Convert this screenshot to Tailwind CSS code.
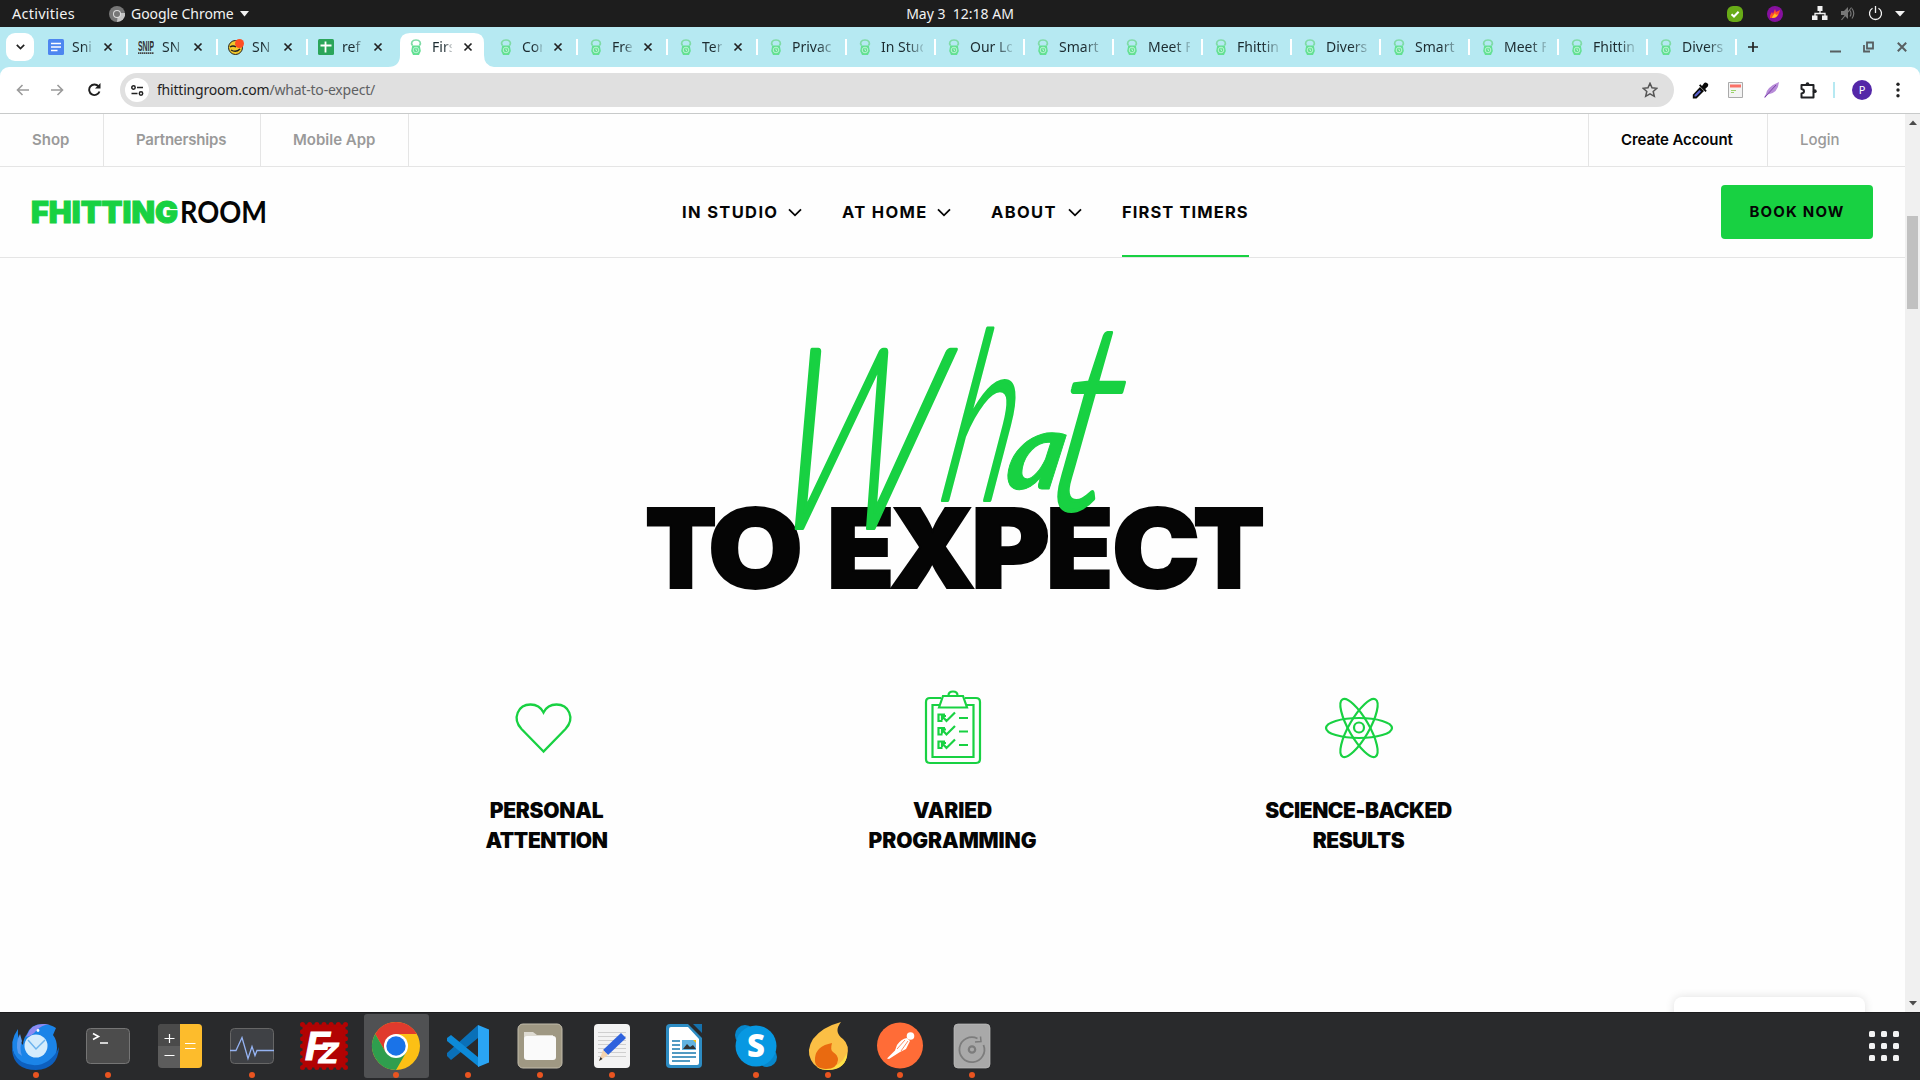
<!DOCTYPE html>
<html lang="en">
<head>
<meta charset="utf-8">
<title>What To Expect</title>
<script src="https://cdn.jsdelivr.net/npm/@tailwindcss/browser@4"></script>
</head>
<body class="w-[1920px] h-[1080px] overflow-hidden bg-white flex flex-col font-['Noto_Sans',sans-serif] text-[14px]">
<svg class="hidden">
  <symbol id="bell" viewBox="0 0 16 16"><path d="M4.500 6.500C2.500 4 4 1 8 1s5.500 3 3.500 5.500" fill="none" stroke="#7fdba6" stroke-width="1.700"/><path d="M4.200 6.500h7.600l1 5.500-1.800 4H5l-1.800-4z" fill="#63e092"/><circle cx="8" cy="11" r="2.800" fill="none" stroke="#c2f5da" stroke-width=".9"/><path d="M8 9.500v1.500l1 1.200" fill="none" stroke="#c2f5da" stroke-width="1"/></symbol>
  <symbol id="x" viewBox="0 0 10 10"><path d="M1.500 1.500l7 7M8.500 1.500l-7 7" stroke="#222" stroke-width="1.700"/></symbol>
  <symbol id="chev" viewBox="0 0 14 9"><path d="M1 1.300l6 6 6-6" fill="none" stroke="#050505" stroke-width="1.800"/></symbol>
</svg>

<div class="h-[27px] shrink-0 bg-[#1d1d1d] text-[#f2f2f2] grid grid-cols-3 items-center">
  <div class="flex items-center pl-3">
    <span class="w-[62px] text-[14.500px] tracking-[0.250px]">Activities</span>
    <svg class="ml-[35px] mr-1.5" width="16" height="16" viewBox="0 0 16 16"><circle cx="8" cy="8" r="8" fill="#777"/><path d="M8 16a8 8 0 0 0 8-9H9z" fill="#c4c4c4"/><circle cx="8" cy="8" r="4" fill="#ddd"/><circle cx="8" cy="8" r="3" fill="#777"/></svg>
    <span class="w-[104px] whitespace-nowrap tracking-[-0.05px]">Google Chrome</span>
    <svg class="ml-[5px]" width="9" height="6"><path d="M0 0h9L4.500 5.500z" fill="#f2f2f2"/></svg>
  </div>
  <div class="text-center"><span class="whitespace-pre">May 3  12:18 AM</span></div>
  <div class="flex items-center justify-end pr-[15px]">
    <svg width="16" height="16" viewBox="0 0 16 16"><rect width="16" height="16" rx="6" fill="#68ab17"/><path d="M4.500 8.200l2.500 2.300 4.600-4.700" fill="none" stroke="#fff" stroke-width="2"/></svg>
    <svg class="ml-6" width="16" height="16" viewBox="0 0 16 16"><circle cx="8" cy="8" r="8" fill="#86109f"/><path d="M3 12c-.5-3 1-4 2-6l1 2 2-5 1 3 4-2c-1 4-2 7-6 8z" fill="#ff4d2e"/><path d="M5 12c0-2 2-3 3-5l1 2 2-1c-1 3-3 4-6 4z" fill="#ffc21c"/></svg>
    <svg class="ml-[29px]" width="16" height="15" viewBox="0 0 16 15"><path d="M8 3v5M3 11V7.500h10V11" fill="none" stroke="#f2f2f2" stroke-width="1.300"/><path d="M5.500 0h5v5h-5zM0 9.500h5.500V14H0zM10 9.500h5.500V14H10z" fill="#f2f2f2"/></svg>
    <svg class="ml-3" width="16" height="15" viewBox="0 0 16 15"><path d="M1 5h3l4-4v12l-4-4H1z" fill="#777"/><path d="M10 4.500q2 3 0 6M12 2.500q3.500 5 0 10M1.500 14l10-12.500" fill="none" stroke="#777" stroke-width="1.200"/></svg>
    <svg class="ml-3" width="15" height="15" viewBox="0 0 15 15"><path d="M4.500 2.300a6 6 0 1 0 6 0M7.500 0v7" fill="none" stroke="#f2f2f2" stroke-width="1.300"/></svg>
    <svg class="ml-3" width="10" height="6"><path d="M0 0h10L5 5.500z" fill="#f2f2f2"/></svg>
  </div>
</div>

<div class="h-10 shrink-0 bg-[#b6e9f2] flex items-start text-[#1c2b30]">
  <div class="w-7 h-7 mt-1.5 ml-1.5 mr-1 rounded-[9px] bg-white flex items-center justify-center"><svg width="9" height="6" viewBox="0 0 9 6"><path d="M.8.8l3.700 3.700L8.200.8" fill="none" stroke="#222" stroke-width="1.700"/></svg></div>
  <div id="tabs" class="flex h-10 ml-[-1px]"></div>
  <svg class="mt-[14px] ml-[11px]" width="12" height="12"><path d="M6 1v10M1 6h10" stroke="#222" stroke-width="1.700"/></svg>
  <div class="ml-auto flex items-center pt-[14px] pr-[13px]">
    <svg width="11" height="12"><path d="M0 10.500h11" stroke="#585f61" stroke-width="2"/></svg>
    <svg class="ml-[22px]" width="11" height="12" viewBox="0 0 11 12"><path d="M4 1.500h6v6H4z" fill="none" stroke="#585f61" stroke-width="1.800"/><path d="M1 4v6.500h6" fill="none" stroke="#585f61" stroke-width="1.800"/></svg>
    <svg class="ml-[23px]" width="10" height="12" viewBox="0 0 10 12"><path d="M.8 1.800l8.400 8.400M9.200 1.800L.8 10.200" stroke="#585f61" stroke-width="2"/></svg>
  </div>
</div>

<div class="bg-[#b6e9f2] shrink-0"><div class="h-[47px] bg-white rounded-t-[9px] border-b border-[#c8caca] flex items-center">
  <svg class="ml-4" width="13" height="12" viewBox="0 0 13 12"><path d="M13 6H1.500M6.500 1l-5 5 5 5" fill="none" stroke="#9b9b9b" stroke-width="1.600"/></svg>
  <svg class="ml-[22px]" width="13" height="12" viewBox="0 0 13 12"><path d="M0 6h11.500M6.500 1l5 5-5 5" fill="none" stroke="#9b9b9b" stroke-width="1.600"/></svg>
  <svg class="ml-6" width="13" height="14" viewBox="0 0 13 14"><path d="M11.500 8.500a5.300 5.300 0 1 1-1-5.200" fill="none" stroke="#1f1f1f" stroke-width="1.900"/><path d="M12.500 0v5.500H7z" fill="#1f1f1f"/></svg>
  <div class="ml-[19px] w-[1554px] h-[34px] rounded-full bg-[#e0e0e0] flex items-center px-[5px]">
    <div class="size-6 rounded-full bg-white flex items-center justify-center"><svg width="13" height="11" viewBox="0 0 13 11"><circle cx="2.500" cy="2.500" r="1.700" fill="none" stroke="#222" stroke-width="1.500"/><circle cx="10" cy="8.500" r="1.700" fill="none" stroke="#222" stroke-width="1.500"/><path d="M6 2.500h6M.5 8.500h6" stroke="#222" stroke-width="1.600"/></svg></div>
    <span class="ml-2 -mt-0.5 text-[#1f1f1f] tracking-[-0.2px]">fhittingroom.com<span class="text-[#5f6163]">/what-to-expect/</span></span>
    <svg class="ml-auto mr-[11px]" width="16" height="16" viewBox="0 0 16 16"><path d="M8 1.300l2 4.500 4.900.5-3.700 3.200 1.100 4.800L8 11.800l-4.300 2.500 1.100-4.800L1.100 6.300 6 5.800z" fill="none" stroke="#555" stroke-width="1.500"/></svg>
  </div>
  <svg class="ml-[18px]" width="17" height="17" viewBox="0 0 17 17"><path d="M8 5l4 4-7.500 7.500H.8v-3.700z" fill="#0a0a0a"/><path d="M7.500 8l1.500 1.500-5 5H2.500V13z" fill="#5a62d0"/><path d="M7 3.500l6.500 6.500 1.200-1.300-1.500-1.700L16 4.300Q17 2 15 1t-3 .3L10 4 8.300 2.300z" fill="#0a0a0a"/></svg>
  <svg class="ml-[19px]" width="15" height="16" viewBox="0 0 15 16"><path d="M.5.500h14v15H.5z" fill="#f3f3f3" stroke="#aaa"/><path d="M2 2.500h11V5.500H2z" fill="#fa7167"/><path d="M3 8.500h5M3 10.500h3" stroke="#9bd36a"/></svg>
  <svg class="ml-[21px]" width="15" height="16" viewBox="0 0 15 16"><path d="M15 0Q14 11 4 12.500L1 16l-1-.5 2-3.500Q3 5 15 0z" fill="#b78bd8"/><path d="M1 15L12 3" stroke="#7b46a8"/></svg>
  <svg class="ml-[21px]" width="17" height="17" viewBox="0 0 17 17"><path d="M1.500 3h12v12.500h-12v-4q2.500-.3 2.500-2.200T1.500 7z" fill="none" stroke="#202124" stroke-width="2" stroke-linejoin="round"/><circle cx="7.500" cy="2.200" r="1.900" fill="#202124"/><circle cx="14.800" cy="9.200" r="1.900" fill="#202124"/></svg>
  <div class="ml-4 w-0.5 h-4 bg-[#b6e9f2]"></div>
  <div class="ml-[17px] size-5 rounded-full bg-[#5427a8] text-white text-[11px] flex items-center justify-center">P</div>
  <svg class="ml-6" width="4" height="16"><circle cx="2" cy="2.200" r="1.700" fill="#222"/><circle cx="2" cy="8" r="1.700" fill="#222"/><circle cx="2" cy="13.800" r="1.700" fill="#222"/></svg>
</div></div>

<div class="flex h-[898px] shrink-0">
  <main class="w-[1905px] bg-[#fefefe] relative overflow-hidden font-[Inter,sans-serif] text-[#050505]">
    <div class="h-[53px] border-b border-[#e5e5e5] flex text-[15px] font-semibold text-[#9a9a9a] leading-[52px]">
      <div class="w-[104px] border-r border-[#e5e5e5] pl-8">Shop</div>
      <div class="w-[157px] border-r border-[#e5e5e5] pl-8 tracking-[-0.2px]">Partnerships</div>
      <div class="w-[148px] border-r border-[#e5e5e5] pl-8">Mobile App</div>
      <div class="ml-auto w-[180px] border-x border-[#e5e5e5] pl-8 tracking-[-0.1px] text-[#050505]">Create Account</div>
      <div class="w-[137px] pl-8 font-medium">Login</div>
    </div>
    <header class="h-[91px] border-b border-[#e5e5e5] flex items-center relative text-[16.500px] font-bold">
      <svg class="ml-[31px]" width="236" height="26"><text x="0" y="24" font-family="Inter" font-size="30" font-weight="900" fill="#18d142" stroke="#18d142" stroke-width="1" textLength="147" lengthAdjust="spacingAndGlyphs">FHITTING</text><text x="149" y="24" font-family="Lato" font-size="31" fill="#050505" textLength="87" lengthAdjust="spacingAndGlyphs">ROOM</text></svg>
      <nav class="ml-[415px] h-full flex items-center whitespace-nowrap tracking-[1.350px]">
        <span class="w-[106px]">IN STUDIO</span><svg width="14" height="9"><use href="#chev"/></svg>
        <span class="ml-10 w-[95px]">AT HOME</span><svg width="14" height="9"><use href="#chev"/></svg>
        <span class="ml-10 w-[77px]">ABOUT</span><svg width="14" height="9"><use href="#chev"/></svg>
        <span class="ml-10 h-full w-[127px] flex items-center border-b-2 border-[#18d142] pt-0.5 tracking-[1.100px]">FIRST TIMERS</span>
      </nav>
      <a class="ml-auto mr-8 w-[152px] h-[54px] rounded bg-[#18d142] flex items-center justify-center text-[15px] tracking-[1.200px]">BOOK NOW</a>
    </header>
    <section class="relative h-[400px]">
      <svg class="absolute inset-0" width="1905" height="400" viewBox="0 258 1905 400">
        <text y="588" font-family="Inter" font-size="110" font-weight="900" fill="#050505" stroke="#050505" stroke-width="2"><tspan x="645" textLength="72" lengthAdjust="spacingAndGlyphs">T</tspan><tspan x="708" textLength="95" lengthAdjust="spacingAndGlyphs">O</tspan> <tspan x="827">E</tspan><tspan x="889">X</tspan><tspan x="971" textLength="79" lengthAdjust="spacingAndGlyphs">P</tspan><tspan x="1046">E</tspan><tspan x="1112" textLength="88" lengthAdjust="spacingAndGlyphs">C</tspan><tspan x="1193" textLength="72" lengthAdjust="spacingAndGlyphs">T</tspan></text>
        <text transform="translate(800 525) skewX(-11)" font-family="Lato" font-style="italic" font-weight="300" fill="#18d142" stroke="#18d142" stroke-width="4" stroke-linejoin="round"><tspan x="-34" y="3" font-size="252" textLength="152" lengthAdjust="spacingAndGlyphs">W</tspan><tspan x="132" y="-25" font-size="236" textLength="68" lengthAdjust="spacingAndGlyphs">h</tspan><tspan x="196" y="-36" font-size="108" font-weight="700" stroke-width="1">a</tspan><tspan x="238" y="-16" font-size="262" textLength="64" lengthAdjust="spacingAndGlyphs">t</tspan></text>
      </svg>
    </section>
    <section class="flex justify-center text-center text-[21px] leading-[30px] font-black">
      <div class="w-[406px] flex flex-col items-center">
        <svg class="mt-[29px] mb-[29px] mr-1.5" width="80" height="80" viewBox="504 687 80 80"><path d="M543.500 751.500L521.500 729c-10-11-3-24.500 9-24.500 6 0 10.500 3 13 8 2.500-5 7-8 13-8 12 0 19 13.500 9 24.500z" fill="none" stroke="#18d142" stroke-width="2.300"/></svg>
        <span class="tracking-[-0.250px]">PERSONAL</span><span class="tracking-[-0.4px]">ATTENTION</span>
      </div>
      <div class="w-[406px] flex flex-col items-center">
        <svg class="mt-[30px] mb-[28px] mr-0.5" width="80" height="80" viewBox="912 687 80 80"><g fill="none" stroke="#18d142" stroke-width="2.200"><path d="M941 697h-11q-4 0-4 4v57q0 4 4 4h46q4 0 4-4v-57q0-4-4-4h-11"/><path d="M939 704h-6.500v52h41v-52H967"/><path d="M939 706.500l4-11.500h20l4 11.500zM948.500 694.500q0-4 4.500-4t4.500 4"/><g id="chk"><path d="M945 713.500h-6.500v6.500h4M942 715l4.500 5 8.500-8.500M942 719v-4h4M959 717h9"/></g><use href="#chk" y="13.500"/><use href="#chk" y="27"/></g></svg>
        <span class="tracking-[-0.1px]">VARIED</span><span class="tracking-[-0.1px]">PROGRAMMING</span>
      </div>
      <div class="w-[406px] flex flex-col items-center">
        <svg class="mt-[29px] mb-[29px]" width="80" height="80" viewBox="1319 687 80 80"><g fill="none" stroke="#18d142" stroke-width="2.200"><ellipse cx="1359" cy="728" rx="33" ry="10"/><ellipse cx="1359" cy="728" rx="33" ry="10" transform="rotate(60 1359 728)"/><ellipse cx="1359" cy="728" rx="33" ry="10" transform="rotate(-60 1359 728)"/><circle cx="1359" cy="727.500" r="5"/></g></svg>
        <span class="tracking-[-0.450px]">SCIENCE-BACKED</span><span class="tracking-[-0.4px]">RESULTS</span>
      </div>
    </section>
    <div class="absolute left-[1674px] top-[883px] w-[191px] h-10 rounded-lg bg-white shadow-[0_0_10px_rgba(0,0,0,0.12)]"></div>
  </main>
  <div class="w-[15px] bg-[#f0f0f0] flex flex-col items-center justify-between relative py-1.5">
    <svg width="8" height="5"><path d="M0 5h8L4 .5z" fill="#4c4c4c"/></svg>
    <div class="absolute left-0.5 top-[102px] w-[11px] h-[93px] bg-[#c1c1c1]"></div>
    <svg width="8" height="5"><path d="M0 0h8L4 4.500z" fill="#4c4c4c"/></svg>
  </div>
</div>

<footer class="h-[68px] shrink-0 bg-[#292a2c] border-t border-[#1c1c1e] flex items-start relative">
  <div id="dock" class="flex">
    <div><svg width="72" height="67" viewBox="0 1013 72 67"><path d="M18 1029q-9 12-4 26 6 15 23 14 19-2 20-21 0-8-4-13l3-7q-6-4-14-4-11 0-15 10-4 5-4 11-6-5-5-16z" fill="#1b84e8"/><path d="M27 1035q4-11 16-11h7q-9 1-14 7-4 5-10 6z" fill="#8f8af0"/><path d="M12 1041q-1 14 10 21 14 7 26-1 8-6 11-14-1 22-23 23-22 0-24-20 0-5 0-9z" fill="#0d5fbe"/><path d="M20 1034q-5 9-2 19l4 3q-3-8 0-15z" fill="#5a9cf0"/><circle cx="36" cy="1046" r="11.500" fill="#d5ecfc"/><path d="M28 1040l8 9 9-9" fill="none" stroke="#6db4ee" stroke-width="1.500"/><circle cx="38" cy="1030.500" r="1.400" fill="#fff"/></svg></div>
    <div><svg width="72" height="67" viewBox="0 1013 72 67"><rect x="14.500" y="1028.500" width="43" height="35" rx="4" fill="#4c4c4c" stroke="#757575"/><path d="M21 1033.500l5.500 3-5.500 3" fill="none" stroke="#fff" stroke-width="1.600"/><path d="M28 1043h8" stroke="#fff" stroke-width="1.500"/></svg></div>
    <div><svg width="72" height="67" viewBox="0 1013 72 67"><rect x="14" y="1024" width="44" height="44" rx="4" fill="#5c5c5c"/><path d="M14 1046h22v-22H18q-4 0-4 4z" fill="#4a4a4a"/><path d="M36 1024h18q4 0 4 4v36q0 4-4 4H36z" fill="#fdbc2c"/><path d="M20.500 1038.500h10M25.500 1034v9M20.500 1055.500h10M41 1043.500h10.500M41 1048.500h10.500" stroke="#fff" stroke-width="1.200"/></svg></div>
    <div><svg width="72" height="67" viewBox="0 1013 72 67"><rect x="14.500" y="1028.500" width="43" height="35" rx="4" fill="#3f4145" stroke="#666"/><path d="M14 1050.500h6l6-13 6 21 4-12 3 9 2-5h17" fill="none" stroke="#95b3f2" stroke-width="1.300"/></svg></div>
    <div><svg width="72" height="67" viewBox="0 1013 72 67"><rect x="14.500" y="1024.500" width="43" height="43" fill="#b20303"/><rect x="14.500" y="1024.500" width="43" height="43" fill="none" stroke="#b20303" stroke-width="5" stroke-dasharray="0 7.167" stroke-linecap="round"/><text x="17" y="1060" font-family="Liberation Sans" font-weight="bold" font-style="italic" font-size="40" fill="#fff" stroke="#fff" textLength="25" lengthAdjust="spacingAndGlyphs">F</text><text x="31" y="1063" font-family="Liberation Sans" font-weight="bold" font-style="italic" font-size="30" fill="#fff" stroke="#fff" textLength="19" lengthAdjust="spacingAndGlyphs">Z</text></svg></div>
    <div><svg width="72" height="67" viewBox="0 1013 72 67"><rect x="4" y="1014" width="65" height="64" rx="3" fill="#505153"/><circle cx="36" cy="1046" r="24" fill="#fcc015"/><path d="M36 1034h20.800a24 24 0 0 0-41.600 0L25.600 1052z" fill="#e03a2d"/><path d="M15.200 1034a24 24 0 0 0 20.800 36l10.400-18H25.600z" fill="#2f9e4e"/><circle cx="36" cy="1046" r="12" fill="#fff"/><circle cx="36" cy="1046" r="9.700" fill="#1a73e8"/></svg></div>
    <div><svg width="72" height="67" viewBox="0 1013 72 67"><path d="M46 1025v13L19 1060l-4-4v-3z" fill="#0a70b8"/><path d="M15 1038l4-3 28 23v9L15 1041z" fill="#0d8ad8"/><path d="M46 1025l11 4.500v33L46 1067z" fill="#2aa5f5"/></svg></div>
    <div><svg width="72" height="67" viewBox="0 1013 72 67"><rect x="14" y="1024" width="44" height="44" rx="5" fill="#9f9883" stroke="#c2bcab"/><path d="M20 1032h9l4 3h16v10H20z" fill="#dedbd2"/><rect x="20" y="1036" width="32" height="24" rx="3" fill="#fafafa"/></svg></div>
    <div><svg width="72" height="67" viewBox="0 1013 72 67"><rect x="18" y="1024" width="36" height="44" rx="4" fill="#f3f3f3"/><path d="M22 1032.500h28M22 1036.500h28M22 1040.500h28M22 1044.500h28M22 1048.500h28M22 1052.500h28M22 1056.500h28" stroke="#cfcfcf"/><path d="M45 1033l5 5-18 17-5-5z" fill="#2f62dd"/><path d="M27 1050l5 5-9 6z" fill="#f4d3ae"/><path d="M24.500 1057l2 2-3.500 2z" fill="#333"/></svg></div>
    <div><svg width="72" height="67" viewBox="0 1013 72 67"><path d="M22 1024h18l14 14v26q0 4-4 4H22q-4 0-4-4v-36q0-4 4-4z" fill="#2d8cc3"/><path d="M45 1024h9v9z" fill="#1571ad"/><path d="M23 1027h17l11 12v24q0 2-2 2H23q-2 0-2-2v-34q0-2 2-2z" fill="#fff"/><path d="M24 1041h8M24 1045h8M24 1049h8M24 1053h24M24 1057h24M24 1061h18" stroke="#1879ae" stroke-width="1.700"/><path d="M34 1040h14v10H34z" fill="#62b2df"/><path d="M35 1049l4-5 3 3 3-2 3 4z" fill="#333"/><path d="M45 1040h3v3z" fill="#f5c211"/></svg></div>
    <div><svg width="72" height="67" viewBox="0 1013 72 67"><circle cx="25" cy="1035" r="10" fill="#0787cc"/><circle cx="47" cy="1057" r="10" fill="#0787cc"/><circle cx="36" cy="1046" r="20.500" fill="#0798e2"/><text x="27" y="1057" font-family="Open Sans" font-weight="800" font-size="31" fill="#fff">S</text></svg></div>
    <div><svg width="72" height="67" viewBox="0 1013 72 67"><path d="M49 1022q-19 5-28 17-7 11-2 21 5 10 17 10 15 0 19-13 3-12-4-18-10-7-2-17z" fill="#fbbf45"/><path d="M25 1067q16 4 26-7l4-7q0 16-19 17-7 0-11-3z" fill="#fde047"/><path d="M40 1043q-16 3-17 15-1 11 11 11 11 0 12-9 0-5-5-8-3-2-1-9z" fill="#e96a10"/></svg></div>
    <div><svg width="72" height="67" viewBox="0 1013 72 67"><circle cx="36" cy="1045.500" r="23" fill="#ff6c37"/><circle cx="46.500" cy="1036" r="3.800" fill="#fff"/><path d="M33 1045q4-6 10-7l3 3-4 8-6 3-11 7-2-.5 8-8z" fill="#fff"/><path d="M37 1051l7-10M33 1049l8-9" stroke="#ff6c37" stroke-width=".8"/></svg></div>
    <div><svg width="72" height="67" viewBox="0 1013 72 67"><rect x="18" y="1024" width="36" height="44" rx="4" fill="#a9a9a9" stroke="#bfbfbf" stroke-width=".7"/><path d="M47.500 1045a12.500 12.500 0 1 1-6-6.500" fill="none" stroke="#7c7c7c" stroke-width="1.800"/><path d="M39 1042l6-.5-.5-5" fill="none" stroke="#7c7c7c" stroke-width="1.500"/><circle cx="36" cy="1049.500" r="3.200" fill="none" stroke="#7c7c7c" stroke-width="2.200"/></svg></div>
  </div>
  <div class="ml-auto mr-[21px] mt-[18px] grid grid-cols-3 gap-[6px]" id="apps"></div>
</footer>

<script>
const docs='<svg width="16" height="16" viewBox="0 0 16 16"><rect width="16" height="16" rx="1.500" fill="#4d86f0"/><path d="M3 4.500h10M3 8h10M3 11.500h6.500" stroke="#fff" stroke-width="1.700"/></svg>';
const snip='<svg width="16" height="16" viewBox="0 0 16 16"><text x="0" y="11.500" font-family="Liberation Sans" font-weight="bold" font-size="15" fill="#333" textLength="16" lengthAdjust="spacingAndGlyphs">SNIP</text><path d="M0 14.200h16" stroke="#444" stroke-width="1.800" stroke-dasharray="1.500 .5"/></svg>';
const face='<svg width="16" height="16" viewBox="0 0 16 16"><circle cx="7.500" cy="8.500" r="7" fill="#f3c92b" stroke="#222"/><path d="M2 8q3-2 6 0M3 11q5 3 9-1" fill="none" stroke="#222" stroke-width="1.400"/><circle cx="11.500" cy="4.500" r="4.500" fill="#ff4f23"/></svg>';
const sheet='<svg width="16" height="16" viewBox="0 0 16 16"><rect width="16" height="16" rx="1.500" fill="#2ba55a"/><path d="M2.500 6.500h11M7.500 2.500v11" stroke="#fff" stroke-width="1.800"/></svg>';
const bell='<svg width="16" height="16"><use href="#bell"/></svg>';
const list=[[docs,'Snip'],[snip,'SN'],[face,'SN'],[sheet,'ref'],[bell,'Firs'],[bell,'Con'],[bell,'Fre'],[bell,'Ter'],[bell,'Privac'],[bell,'In Stud'],[bell,'Our Lo'],[bell,'Smart'],[bell,'Meet F'],[bell,'Fhittin'],[bell,'Divers'],[bell,'Smart'],[bell,'Meet F'],[bell,'Fhittin'],[bell,'Divers']];
document.getElementById('tabs').innerHTML=list.map(([icon,t],i)=>{
  const small=i<8, active=i===4, sep=i!==3&&!active;
  return `<div class="${small?'w-[90px]':'w-[89px]'} h-10 relative flex shrink-0 items-center pl-[11px] pb-px">
    ${active?'<svg class="absolute left-[-9px] top-1.5" width="106" height="34" viewBox="0 0 106 34"><path d="M0 34q12 0 12-12V10Q12 0 22 0h64q10 0 10 10v12q0 12 12 12z" fill="#fff"/></svg>':''}
    <span class="relative w-4 shrink-0">${icon}</span>
    <span class="relative ml-2 ${small?'w-[20px]':'w-[42px]'} overflow-hidden whitespace-nowrap shrink-0 [mask-image:linear-gradient(to_right,black_60%,rgba(0,0,0,0.2))]">${t}</span>
    ${small?'<svg class="relative ml-[11px]" width="10" height="10"><use href="#x"/></svg>':''}
    ${sep?'<span class="absolute right-[-1px] top-3 w-0.5 h-4 bg-white"></span>':''}
  </div>`}).join('');
document.getElementById('apps').innerHTML='<span class="size-[6px] rounded-[1.500px] bg-[#f2f2f2]"></span>'.repeat(9);
[...document.querySelectorAll('#dock > div')].forEach((d,i)=>{
  d.className='relative';
  if(![2,4,9].includes(i)) d.insertAdjacentHTML('beforeend','<span class="absolute left-[33px] top-[59px] size-1.5 rounded-full bg-[#e95420]"></span>');
});
</script>
</body>
</html>
